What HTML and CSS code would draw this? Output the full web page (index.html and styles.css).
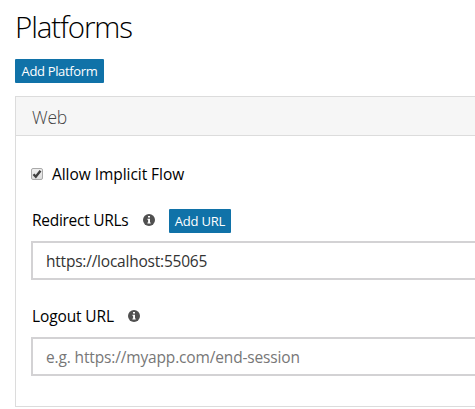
FILE: index.html
```
<!DOCTYPE html>
<html lang="en">
<head>
<meta charset="utf-8">
<title>Platforms</title>
<link rel="stylesheet" href="styles.css">
</head>
<body>
<main class="page">
  <h1 class="title"><span>Platforms</span></h1>
  <button class="btn btn-platform" type="button"><span>Add Platform</span></button>
  <section class="panel">
    <h2 class="panel-head"><span>Web</span></h2>
    <div class="panel-body">
      <label class="check-row">
        <svg class="check" viewBox="0 0 13 13"><defs><linearGradient id="g" x2="0" y2="1"><stop stop-color="#f0f0f0"/><stop offset="1" stop-color="#dcdcdc"/></linearGradient></defs><rect x=".5" y=".5" width="11" height="11" rx="1.5" fill="url(#g)" stroke="#a9a9a9"/><path d="M2.5 6.2 4.8 8.7 9.5 2.8" fill="none" stroke="#3f3f3f" stroke-width="2.4"/></svg>
        <span class="t-allow">Allow Implicit Flow</span>
      </label>
      <div class="field-head">
        <span class="t-redirect">Redirect URLs</span>
        <svg class="info info-redirect" viewBox="0 0 12 12"><circle cx="6" cy="6" r="6" fill="#505050"/><path d="M5 2h2v1.6H5zM4.4 4.7H7v3.8h.7v1H4.4v-1h.7V5.7h-.7z" fill="#fff"/></svg>
        <button class="btn btn-url" type="button"><span>Add URL</span></button>
      </div>
      <div class="input t-value"><span>https://localhost:55065</span></div>
      <div class="field-head field-logout">
        <span class="t-logout">Logout URL</span>
        <svg class="info" viewBox="0 0 12 12"><circle cx="6" cy="6" r="6" fill="#505050"/><path d="M5 2h2v1.6H5zM4.4 4.7H7v3.8h.7v1H4.4v-1h.7V5.7h-.7z" fill="#fff"/></svg>
      </div>
      <div class="input input-logout t-hint"><span>e.g. https://myapp.com/end-session</span></div>
    </div>
  </section>
</main>
</body>
</html>
```
FILE: styles.css
```
* { box-sizing: border-box; }
body {
  margin: 0;
  background: #fff;
  color: #000;
  font: 400 15.5px/24px "Open Sans", "Noto Sans", sans-serif;
  overflow: hidden;
}
.page { padding: 7px 0 0 15px; white-space: nowrap; }
.title {
  margin: 0 0 12px;
  font-size: 29.5px;
  font-weight: 300;
  line-height: 40px;
  letter-spacing: -1.1px;
}
.btn {
  display: block;
  height: 24px;
  padding: 0;
  border: 0;
  border-radius: 1px;
  background: #1072a8;
  color: #fff;
  font: 400 13px/24px "Open Sans", "Noto Sans", sans-serif;
  text-align: center;
}
.btn-platform { width: 89px; letter-spacing: -0.35px; }
.btn-url { width: 62px; margin-left: 14px; letter-spacing: -0.2px; }
.panel {
  height: 311px;
  margin-top: 13px;
  border: 1px solid #dcdcdc;
  border-right: 0;
}
.panel-head {
  height: 39px;
  margin: 0;
  padding-left: 16px;
  border-bottom: 1px solid #dcdcdc;
  background: #f6f6f6;
  color: #444;
  font-size: 17.5px;
  font-weight: 300;
  line-height: 40px;
  letter-spacing: -0.2px;
}
.panel-body { padding: 26px 0 0 15px; }
.check-row { display: flex; align-items: center; height: 24px; }
.check { width: 13px; height: 13px; margin-right: 8px; }
.t-allow { letter-spacing: -0.05px; }
.field-head { display: flex; align-items: center; height: 24px; margin-top: 23px; }
.field-logout { margin-top: 24px; }
.t-redirect { width: 97px; margin: 0 0 3px 1px; letter-spacing: -0.28px; }
.t-logout { width: 82px; margin-left: 1px; letter-spacing: -0.12px; }
.info { width: 12px; height: 12px; margin-left: 14px; }
.info-redirect { margin-bottom: 2px; }
.input {
  height: 39px;
  margin-top: 8px;
  padding-left: 13px;
  border: 2px solid #d3d2d4;
  border-right: 0;
  line-height: 37px;
}
.input-logout { margin-top: 9px; }
.t-value { color: #333; letter-spacing: -0.22px; }
.t-hint { color: #777; letter-spacing: -0.15px; }
```
